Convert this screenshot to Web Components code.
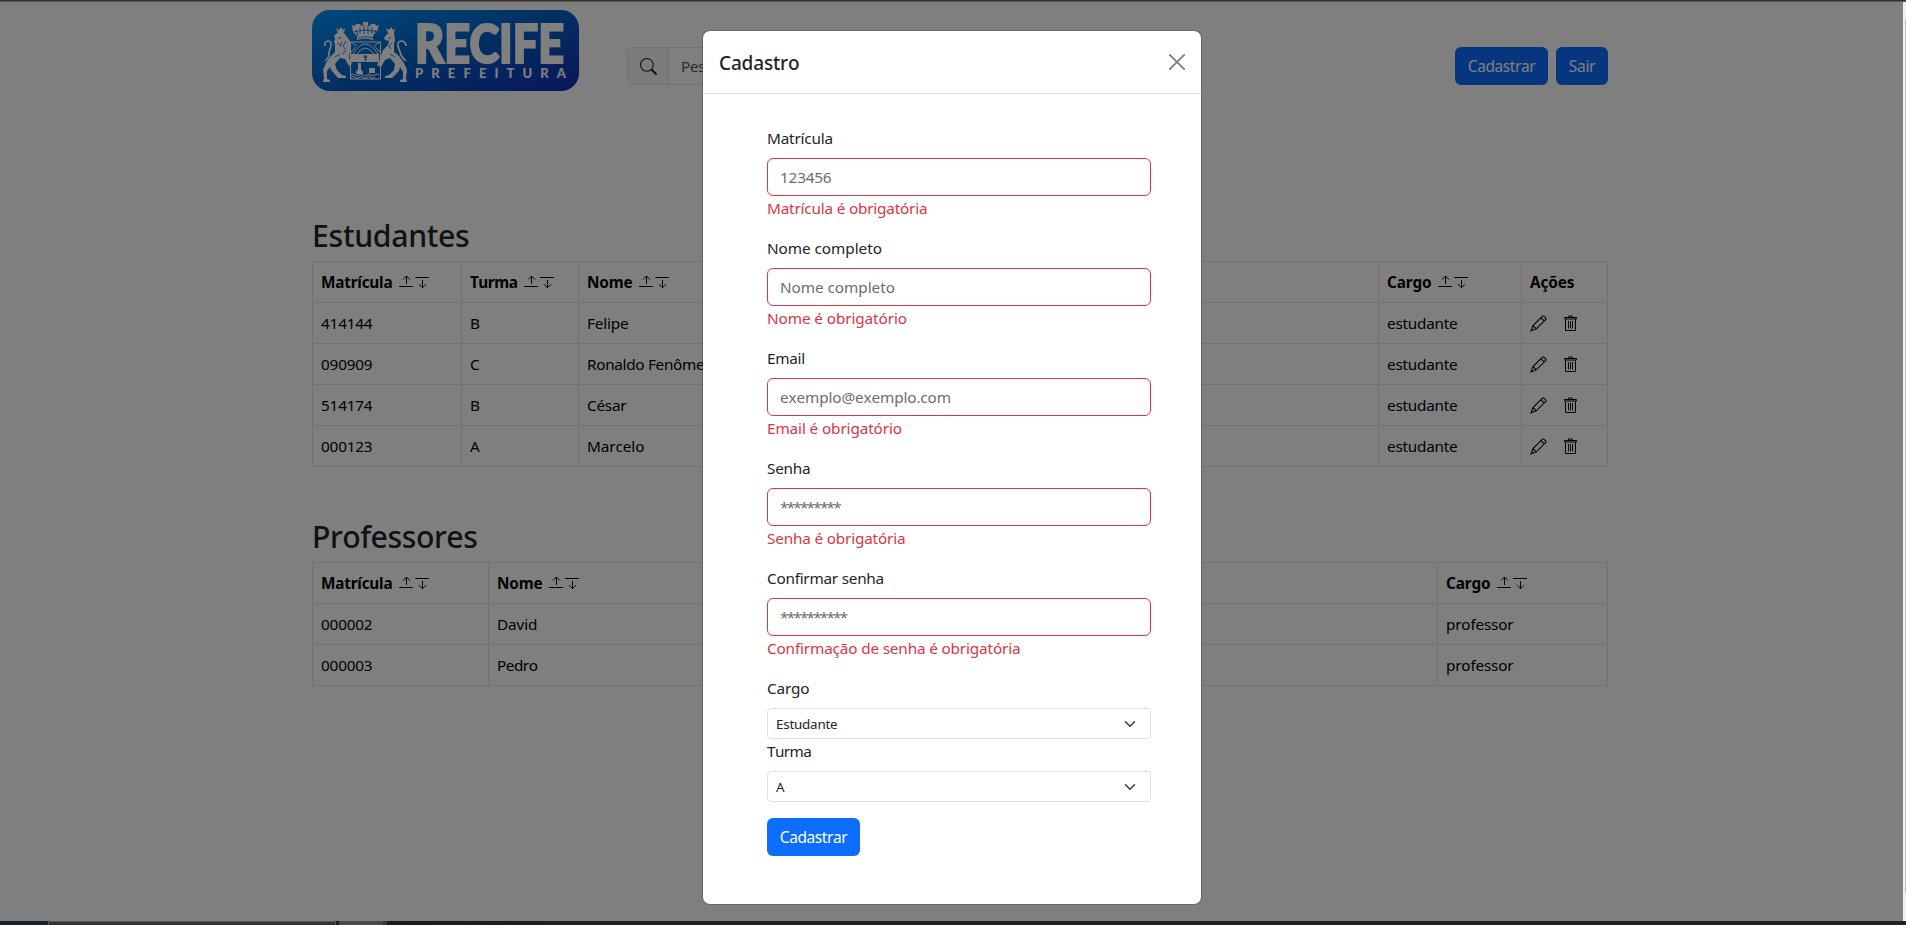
<!DOCTYPE html>
<html lang="pt-BR">
<head>
<meta charset="utf-8">
<title>Cadastro</title>
<style>
html,body{margin:0;height:100%;overflow:hidden;background:#fff;font-family:"Noto Sans","Open Sans",sans-serif}
</style>
</head>
<body>
<app-page></app-page>
<script>
const define = (name, html, init) => {
  const t = document.createElement('template');
  t.innerHTML = html;
  customElements.define(name, class extends HTMLElement {
    connectedCallback() {
      if (this.shadowRoot) return;
      this.attachShadow({mode: 'open'}).append(t.content.cloneNode(true));
      if (init) init(this, this.shadowRoot);
    }
  });
};

/* Text run tracked to a given advance width */
define('fit-text', `<style>:host{display:inline-block;white-space:nowrap;font-kerning:none}</style><span><slot></slot></span>`, (el, root) => {
  const s = root.querySelector('span');
  const w = parseFloat(el.getAttribute('w'));
  const n = el.textContent.length;
  if (w) s.style.letterSpacing = ((w - .6 - s.getBoundingClientRect().width) / n) + 'px';
});

define('city-logo', `<style>:host{display:block;width:267px;height:81px}svg{display:block;overflow:visible}</style>
<svg width="267" height="81" viewBox="0 0 267 81">
<defs><linearGradient id="g" x1="0" y1="0" x2="1" y2="1" gradientUnits="objectBoundingBox"><stop offset="0" stop-color="#0096ff"/><stop offset=".12" stop-color="#0086ea"/><stop offset=".5" stop-color="#0560c6"/><stop offset="1" stop-color="#142cb4"/></linearGradient></defs>
<rect width="267" height="81" rx="18" fill="url(#g)"/>
<g fill="#fff" stroke="none">
<path d="M40 15l3 1 1-2h4l1 2 2-1v-3h5v3l2 1 1-2h4l1 2 3-1-2 7-4 4v4q-8-3-16 0v-4l-4-4z"/>
<path d="M24 18l3 2 2-3 2 3 2-2-1 5h-6z"/>
<path d="M25 23q4-1 8 1l2 3 3 4v9l-1 8 3 6-3 2-4-7-5-1-5 6 2 6 5 5 4 1v2h-8l-7-8-1-3-3 4v8l3 1v2h-7l1-4-1-8 3-7 4-6 5-5v-8l-1-2 1-3-1-3z"/>
<path d="M74 18l3 2 2-3 2 3 2-2-1 5h-6z"/>
<path d="M82 23q-4-1-7 1l-3 4 1 2 4 1-1 4-5 5-3 9-3 6 4 2 4-7 5-2 5 6-1 6-5 5-4 1v2h7l7-7 1-4 3 5v7l-3 1v2h7l-1-4 1-8-3-7-5-7-5-4v-8l1-4z"/>
<path d="M39 44h28v8H39z"/><path d="M46 53h3v6l2 3v2h-7v-2l2-3zM57 58h6v5h-6z"/>
</g>
<g fill="none" stroke="#fff" stroke-width="1">
<path d="M38.500 32v37h30v-37zM41 44q12-20 25 0M45 44q8-12 17 0M39 32l6 4M68 32l-6 4M39 42l5-5M68 42l-5-5"/>
<path d="M39 65q2-2 4 0t4 0 4 0 4 0 4 0 4 0 4 0M39 67.500q2-2 4 0t4 0 4 0 4 0 4 0 4 0"/>
<path d="M13 51q5-4 4-9l2-6q1-5-3-5-4 1-3 5M94 51q-5-4-6-9l-2-6q-1-5 4-5 4 1 4 5" stroke-width="1.600"/>
</g>
<g fill="none" stroke="#0560ca" stroke-width=".8"><path d="M53.500 45v6M51.500 47h4" stroke-width="1.200"/><path d="M48 17v7M52 15v9M56 15v9M60 17v7M44 20l2 6M64 20l-2 6M42 21.500q11-3 23 0M46 28q8-3 16 0M26 28h3M25 33l3 2M34 31l-3 5 3 4-3 4M30 32l-2 5M79 28h-3M80 33l-3 3 2 3M23 47l5-3M83 47l-5-3"/></g>
<text x="103" y="52.500" font-family="Lato,sans-serif" font-weight="900" font-size="53.500" fill="#fff" stroke="#fff" stroke-width="2.200" textLength="149" lengthAdjust="spacingAndGlyphs">RECIFE</text>
<text x="103" y="68.200" font-family="Lato,sans-serif" font-weight="900" font-size="13" fill="#fff" textLength="151" lengthAdjust="spacing">PREFEITURA</text>
</svg>`);

define('sort-icons', `<style>:host{display:inline-flex;gap:2px;margin-left:7px;vertical-align:-1px}svg{display:block}</style>
<svg width="14" height="14" fill="none" stroke="#000"><path d="M0 11.500h14M7.500 1v8M4 4.500l3.500-3.500 3.500 3.500"/></svg>
<svg width="14" height="14" fill="none" stroke="#000"><path d="M0 2.500h14M7.500 5v7.500M4 9.200l3.500 3.500 3.500-3.500"/></svg>`);

define('row-actions', `<style>:host{display:flex;gap:17px;height:25px;align-items:center}svg{display:block}</style>
<svg width="17" height="17" viewBox="0 0 17 17" fill="none" stroke="#000" stroke-width="1.100"><path d="M1 15.800l2-5.200L12.500 1.200q.7-.5 1.300 0l2 2q.5.700 0 1.300L6.300 13.800zM3 10.600l3.300 3.200M11 2.800l3.300 3.300M1 15.800l2.500-1"/></svg>
<svg width="13" height="17" viewBox="0 0 13 17" fill="none" stroke="#000"><path d="M.5 2.500h12v1.500H.5zM4.500 2.500v-1.500h4v1.500M1.500 4v11.500h10V4"/><path d="M4.500 6v7.500M6.500 6v7.500M8.500 6v7.500" stroke-width=".9"/></svg>`);

define('app-button', `<style>:host{display:inline-flex;align-items:center;justify-content:center;box-sizing:border-box;height:38px;background:#0d6efd;border-radius:6px;color:#fff;font-size:15.500px;line-height:24px}</style><slot></slot>`);

define('search-box', `<style>:host{display:flex;box-sizing:border-box;height:38px;width:560px;border:1px solid #dee2e6;border-radius:6px;font-size:15.300px;overflow:hidden}
.i{width:40px;background:#f8f9fa;border-right:1px solid #dee2e6;display:flex;align-items:center;justify-content:center}.t{padding:0 12px;line-height:37px;color:#54595e}</style>
<div class="i"><svg width="17" height="17" viewBox="0 0 16 16" fill="#212529"><path d="M11.742 10.344a6.500 6.500 0 1 0-1.397 1.398h-.001q.044.060.098.115l3.850 3.850a1 1 0 0 0 1.415-1.414l-3.850-3.850a1 1 0 0 0-.115-.1zM12 6.500a5.500 5.500 0 1 1-11 0 5.500 5.500 0 0 1 11 0"/></svg></div><div class="t"><fit-text w="67">Pesquisar</fit-text></div>`);

define('data-table', `<style>:host{display:block}
h2{margin:0 0 8px;padding-top:4px;font-size:30.200px;font-weight:500;line-height:34.400px;color:#212529}
.g{display:grid;border-top:1px solid #dee2e6;border-left:1px solid #dee2e6;width:1295px;color:#000;font-size:15.300px}
.c{box-sizing:border-box;height:41px;padding:8px;line-height:24px;border-right:1px solid #dee2e6;border-bottom:1px solid #dee2e6;white-space:nowrap}
.h{font-weight:700}</style><h2></h2><div class="g"></div>`, (el, root) => {
  const d = TABLES[el.getAttribute('name')];
  const fit = ([t, w]) => `<fit-text w="${w}">${t}</fit-text>`;
  root.querySelector('h2').innerHTML = fit(d.title);
  const g = root.querySelector('.g');
  g.style.gridTemplateColumns = d.cols;
  g.innerHTML = d.head.map(h => `<div class="c h">${fit(h)}${h[0] === 'Ações' ? '' : '<sort-icons></sort-icons>'}</div>`).join('') +
    d.rows.flat().map(c => `<div class="c">${c ? fit(c) : '<row-actions></row-actions>'}</div>`).join('');
});

define('form-field', `<style>:host{display:block;margin-bottom:16px;font-size:15.300px;line-height:24px;color:#212529}
.l{height:24px;margin-bottom:8px}.b{box-sizing:border-box;height:38px;border:1px solid #dc3545;border-radius:6px;padding:6px 12px;color:#6a6e73}.e{height:24px;color:#dc3545}</style>
<div class="l"><slot name="label"></slot></div><div class="b"><slot></slot></div><div class="e"><slot name="error"></slot></div>`);

define('form-select', `<style>:host{display:block;font-size:15.300px;line-height:24px;color:#212529}
.l{height:24px;margin-bottom:8px}.b{box-sizing:border-box;height:31px;border:1px solid #dee2e6;border-radius:4px;padding:0 12px 0 8px;font-size:13.400px;display:flex;align-items:center;justify-content:space-between}</style>
<div class="l"><slot name="label"></slot></div><div class="b"><slot></slot><svg width="16" height="12" viewBox="0 0 16 16"><path fill="none" stroke="#343a40" stroke-linecap="round" stroke-linejoin="round" stroke-width="2" d="m2 5 6 6 6-6"/></svg></div>`);

define('modal-dialog', `<style>:host{display:flex;flex-direction:column;box-sizing:border-box;width:500px;height:875px;background:#fff;background-clip:padding-box;border:1px solid rgba(0,0,0,.175);border-radius:8px}
header{display:flex;align-items:center;justify-content:space-between;height:62px;padding:0 16px;border-bottom:1px solid #dee2e6;font-size:19px;font-weight:500;color:#212529}
header fit-text{padding-top:2px}
.body{padding:32px 50px 0 64px}app-button{margin-top:16px;width:93px}</style>
<header><fit-text w="81">Cadastro</fit-text><svg width="16" height="16" viewBox="0 0 16 16" stroke="#7f7f7f" stroke-width="1.800" stroke-linecap="round"><path d="M.8.8l14.400 14.400M15.200.8L.8 15.200"/></svg></header>
<div class="body">
<form-field><fit-text slot="label" w="66.500">Matrícula</fit-text><fit-text w="52">123456</fit-text><fit-text slot="error" w="161">Matrícula é obrigatória</fit-text></form-field>
<form-field><fit-text slot="label" w="115.500">Nome completo</fit-text><fit-text w="115.500">Nome completo</fit-text><fit-text slot="error" w="140.500">Nome é obrigatório</fit-text></form-field>
<form-field><fit-text slot="label" w="38.500">Email</fit-text><fit-text w="171.500">exemplo@exemplo.com</fit-text><fit-text slot="error" w="135.500">Email é obrigatório</fit-text></form-field>
<form-field><fit-text slot="label" w="44">Senha</fit-text><fit-text w="60.500">*********</fit-text><fit-text slot="error" w="139">Senha é obrigatória</fit-text></form-field>
<form-field><fit-text slot="label" w="117.500">Confirmar senha</fit-text><fit-text w="67">**********</fit-text><fit-text slot="error" w="254">Confirmação de senha é obrigatória</fit-text></form-field>
<form-select><fit-text slot="label" w="43">Cargo</fit-text><fit-text w="62">Estudante</fit-text></form-select>
<form-select><fit-text slot="label" w="45">Turma</fit-text><fit-text w="9">A</fit-text></form-select>
<app-button><fit-text w="68">Cadastrar</fit-text></app-button>
</div>`);

const ST = ['estudante', 71], PR = ['professor', 68];
const TABLES = {
  est: {title: ['Estudantes', 158], cols: '149px 117px 400px 400px 143px 1fr',
    head: [['Matrícula', 72], ['Turma', 48], ['Nome', 46], ['Email', 42], ['Cargo', 45], ['Ações', 45]],
    rows: [
      [['414144', 52], ['B', 9], ['Felipe', 42], ['', 0], ST, null],
      [['090909', 52], ['C', 10], ['Ronaldo Fenômeno', 136], ['', 0], ST, null],
      [['514174', 52], ['B', 9], ['César', 40], ['', 0], ST, null],
      [['000123', 52], ['A', 10], ['Marcelo', 58], ['', 0], ST, null]]},
  prof: {title: ['Professores', 166], cols: '176px 475px 474px 1fr',
    head: [['Matrícula', 72], ['Nome', 46], ['Email', 42], ['Cargo', 45]],
    rows: [
      [['000002', 52], ['David', 41], ['', 0], PR],
      [['000003', 52], ['Pedro', 41], ['', 0], PR]]}
};

define('app-page', `<style>
:host{display:flex;flex-direction:column;height:925px;width:1906px;position:relative}
.top{height:2px;box-sizing:border-box;background:#353435;border-bottom:1px solid #555}
.main{flex:1;display:flex;min-height:0}
.page{width:1903px;position:relative;background:#fff}
.wrap{width:1296px;margin-left:312px}
.bar{display:flex;align-items:flex-start;height:212.600px;padding-top:8px;box-sizing:border-box}
search-box{margin:37px 0 0 48px}.btns{display:flex;gap:8px;margin:37px 0 0 auto}
.shade{position:absolute;inset:0;background:rgba(0,0,0,.5)}
modal-dialog{position:absolute;left:702px;top:28px}
data-table + data-table{margin-top:48.600px}
.scroll{width:3px;background:#f1f1f1;padding:17px 0 28px 2px;box-sizing:border-box;display:flex}
.scroll i{flex:1;background:#c1c1c1}
.task{height:4px;display:flex;background:#212122}
.task i{height:4px;box-sizing:border-box}
</style>
<div class="top"></div>
<div class="main"><div class="page"><div class="wrap">
<div class="bar"><city-logo></city-logo><search-box></search-box><div class="btns"><app-button style="width:93px"><fit-text w="68">Cadastrar</fit-text></app-button><app-button style="width:52px"><fit-text w="27">Sair</fit-text></app-button></div></div>
<data-table name="est"></data-table><data-table name="prof"></data-table>
</div><div class="shade"></div><modal-dialog></modal-dialog></div>
<div class="scroll"><i></i></div></div>
<div class="task"><i style="width:48px;background:#1a2229"></i><i style="width:288px;background:#353132;border:1px solid #555;border-bottom:0"></i><i style="width:3px;background:#1e1b22"></i><i style="width:44px;background:#4b474e"></i><i style="width:4px;background:#3a373c"></i><i style="width:260px;background:linear-gradient(90deg,#1c1920,#212122)"></i></div>`);
</script>
</body>
</html>
